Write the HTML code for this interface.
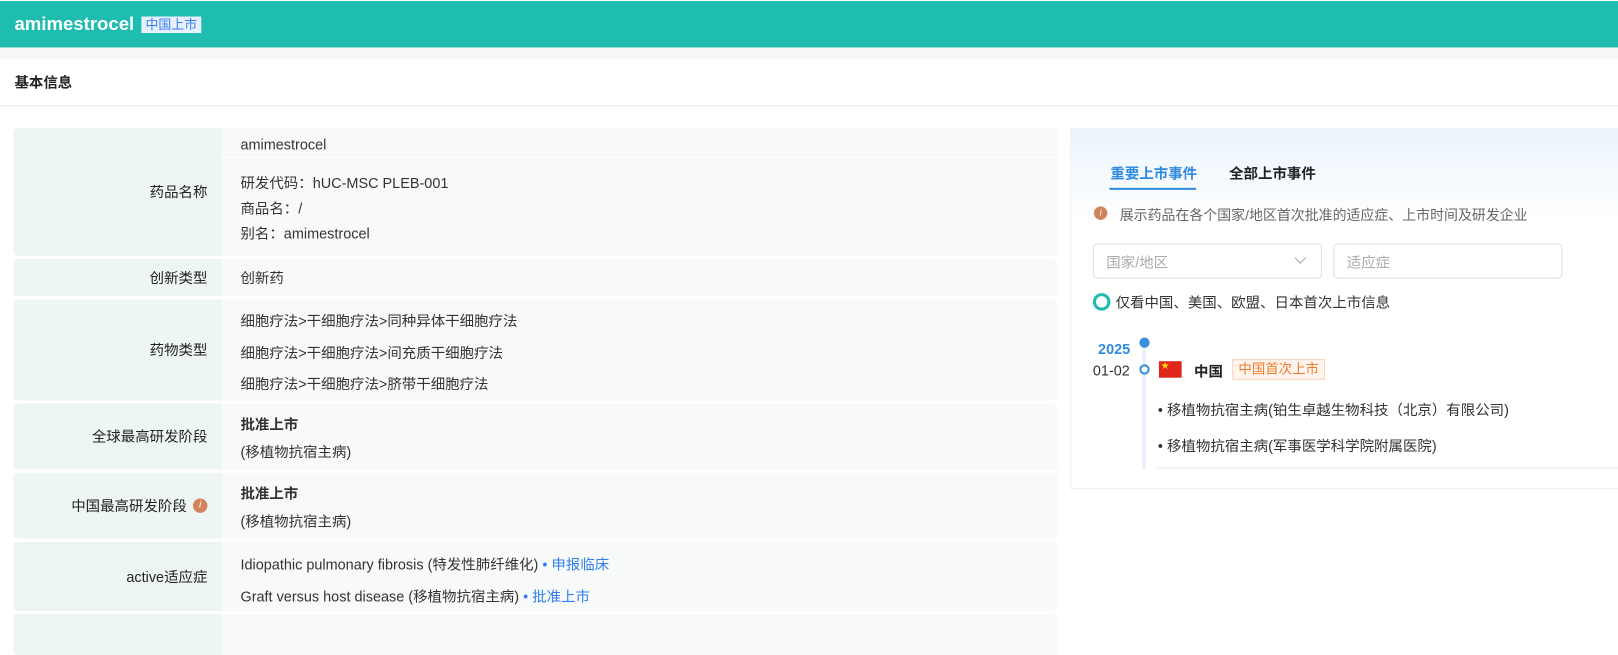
<!DOCTYPE html>
<html><head><meta charset="utf-8"><style>
*{margin:0;padding:0;box-sizing:border-box}
html,body{width:1618px;height:624px;overflow:hidden;background:#fff}
#w{position:absolute;left:0;top:0;width:1568px;height:605px;transform:scale(1.032);transform-origin:0 0;font-family:"Liberation Sans","Noto Sans CJK SC",sans-serif;color:#333;font-size:14px}
.hdr{position:absolute;left:0;top:1px;width:1568px;height:45px;background:#1fbcb0}
.hdr .t{position:absolute;left:14px;top:12px;font-size:18px;font-weight:bold;color:#fff}
.hdr .tag{position:absolute;left:137px;top:15px;height:16px;line-height:16px;padding:0 4px;background:#e6f0ff;color:#3a7ef0;font-size:12.5px}
.band{position:absolute;left:0;top:46px;width:1568px;height:11px;background:#f5f6f8}
.sec{position:absolute;left:14px;top:70px;font-size:14px;font-weight:bold;color:#222}
.line{position:absolute;left:0;top:102px;width:1568px;height:1px;background:#e5e7ea}
.row{position:absolute;left:13px;width:1012px;display:flex;border-radius:4px;overflow:hidden}
.lab{width:202px;background:#eef6f5;display:flex;align-items:center;justify-content:flex-end;padding-right:14px;color:#222}
.val{flex:1;background:#f8fafa;padding-left:18px;color:#333}
.val div{position:absolute}
.b{font-weight:bold}
.blue{color:#2f7ff0}
.panel{position:absolute;left:1037px;top:124px;width:590px;height:350px;border:1px solid #eef0f2;background:linear-gradient(#eaf4fd,#fff 90px)}
.ab{position:absolute;white-space:nowrap}
</style></head><body><div id="w">
<div class="hdr"><span class="t">amimestrocel</span><span class="tag">中国上市</span></div>
<div class="band"></div>
<div class="sec">基本信息</div>
<div class="line"></div>

<div class="row" style="top:124px;height:124px"><div class="lab">药品名称</div><div class="val" style="position:relative">
<div style="left:0;top:0;width:100%;height:29px;border-bottom:1px solid #fff;"></div>
<div style="left:18px;top:8px">amimestrocel</div>
<div style="left:18px;top:43px">研发代码：hUC-MSC PLEB-001</div>
<div style="left:18px;top:68px">商品名：/</div>
<div style="left:18px;top:92px">别名：amimestrocel</div></div></div>

<div class="row" style="top:251px;height:36px"><div class="lab">创新类型</div><div class="val" style="line-height:36px">创新药</div></div>

<div class="row" style="top:290px;height:98px"><div class="lab">药物类型</div><div class="val" style="position:relative">
<div style="left:18px;top:11px">细胞疗法&gt;干细胞疗法&gt;同种异体干细胞疗法</div>
<div style="left:18px;top:42px">细胞疗法&gt;干细胞疗法&gt;间充质干细胞疗法</div>
<div style="left:18px;top:72px">细胞疗法&gt;干细胞疗法&gt;脐带干细胞疗法</div></div></div>

<div class="row" style="top:391px;height:64px"><div class="lab">全球最高研发阶段</div><div class="val" style="position:relative">
<div class="b" style="left:18px;top:10px">批准上市</div>
<div style="left:18px;top:37px">(移植物抗宿主病)</div></div></div>

<div class="row" style="top:458px;height:64px"><div class="lab">中国最高研发阶段<span style="display:inline-block;width:14px;height:14px;border-radius:50%;background:#d0845a;color:#fff;font-size:10px;font-style:italic;text-align:center;line-height:14px;margin-left:6px">i</span></div><div class="val" style="position:relative">
<div class="b" style="left:18px;top:10px">批准上市</div>
<div style="left:18px;top:37px">(移植物抗宿主病)</div></div></div>

<div class="row" style="top:525px;height:67px"><div class="lab">active适应症</div><div class="val" style="position:relative">
<div style="left:18px;top:12px">Idiopathic pulmonary fibrosis (特发性肺纤维化) <span class="blue">• 申报临床</span></div>
<div style="left:18px;top:43px">Graft versus host disease (移植物抗宿主病) <span class="blue">• 批准上市</span></div></div></div>

<div class="row" style="top:595px;height:40px"><div class="lab"></div><div class="val"></div></div>

<div class="panel">
<div class="ab" style="left:38px;top:33px;color:#2f8ae0;font-weight:bold">重要上市事件</div>
<div class="ab" style="left:37px;top:57px;width:84px;height:2px;background:#2f8ae0"></div>
<div class="ab" style="left:153px;top:33px;font-weight:bold;color:#222">全部上市事件</div>
<div class="ab" style="left:22px;top:75px;width:13px;height:13px;border-radius:50%;background:#d0845a;color:#fff;font-size:9px;font-style:italic;text-align:center;line-height:13px">i</div>
<div class="ab" style="left:47px;top:72px;color:#666;font-size:13.5px">展示药品在各个国家/地区首次批准的适应症、上市时间及研发企业</div>
<div class="ab" style="left:21px;top:111px;width:222px;height:34px;border:1px solid #dcdfe6;border-radius:4px;background:#fff"><span class="ab" style="left:12px;top:7px;color:#aaa">国家/地区</span><span class="ab" style="right:16px;top:9px;width:8px;height:8px;border-right:1px solid #aaa;border-bottom:1px solid #aaa;transform:rotate(45deg)"></span></div>
<div class="ab" style="left:254px;top:111px;width:222px;height:34px;border:1px solid #dcdfe6;border-radius:4px;background:#fff"><span class="ab" style="left:12px;top:7px;color:#aaa">适应症</span></div>
<div class="ab" style="left:21px;top:159px;width:17px;height:17px;border-radius:50%;border:3px solid #1fbcb0"></div>
<div class="ab" style="left:43px;top:158px;color:#333">仅看中国、美国、欧盟、日本首次上市信息</div>
<div class="ab" style="left:26px;top:205px;color:#2f8ae0;font-weight:bold">2025</div>
<div class="ab" style="left:21px;top:226px;color:#333">01-02</div>
<div class="ab" style="left:69px;top:210px;width:3px;height:120px;background:#e6eef8"></div>
<div class="ab" style="left:66px;top:202px;width:10px;height:10px;border-radius:50%;background:#3b8fe0"></div>
<div class="ab" style="left:66px;top:228px;width:10px;height:10px;border-radius:50%;border:2px solid #3b8fe0;background:#fff"></div>
<div class="ab" style="left:85px;top:225px;width:22px;height:16px;background:#e0251b;color:#ffde00;font-size:8px;line-height:10px;padding-left:2px">★</div>
<div class="ab" style="left:119px;top:225px;font-weight:bold;color:#222">中国</div>
<div class="ab" style="left:156px;top:223px;border:1px solid #fbd2b8;background:#fff5ee;color:#f07a2a;font-size:13px;padding:0 5px;line-height:18px">中国首次上市</div>
<div class="ab" style="left:84px;top:262px;color:#333">• 移植物抗宿主病(铂生卓越生物科技（北京）有限公司)</div>
<div class="ab" style="left:84px;top:297px;color:#333">• 移植物抗宿主病(军事医学科学院附属医院)</div>
<div class="ab" style="left:84px;top:328px;width:500px;height:1px;background:#e8eaee"></div>
</div>
</div></body></html>
